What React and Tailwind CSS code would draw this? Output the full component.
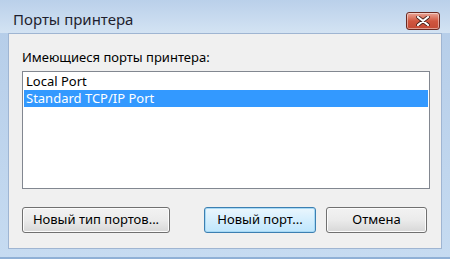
const ports = ['Local Port', 'Standard TCP/IP Port']

const CloseButton = () => (
  <div className="w-[34px] h-[18px] rounded-[3px] border border-[#6b2a22] bg-gradient-to-b from-[#e9a597] via-[#d0563f] to-[#c44a34] flex items-center justify-center shadow-[inset_0_0_0_1px_rgba(255,255,255,0.45)]">
    <svg width="14" height="10" viewBox="0 0 14 10">
      <path d="M2 1 L12 9 M12 1 L2 9" stroke="#3a1a14" strokeWidth="3.6" strokeLinecap="round" />
      <path d="M2 1 L12 9 M12 1 L2 9" stroke="#ffffff" strokeWidth="2.2" strokeLinecap="round" />
    </svg>
  </div>
)

const DialogButton = ({ label, width, primary }) => (
  <button
    className={
      primary
        ? `${width} h-[26px] rounded-[3px] border border-[#3c7fb1] bg-gradient-to-b from-[#eaf6fd] to-[#bee6fd] text-[13px] text-black shadow-[inset_0_0_0_1px_#a7d9f5]`
        : `${width} h-[26px] rounded-[3px] border border-[#707070] bg-gradient-to-b from-[#f2f2f2] via-[#ebebeb] to-[#d7d7d7] text-[13px] text-black shadow-[inset_0_0_0_1px_#fcfcfc]`
    }
  >
    {label}
  </button>
)

export default function App() {
  return (
    <div className="w-[450px] h-[259px] bg-gradient-to-b from-[#b4cce8] to-[#c6dbf1] flex flex-col font-['Noto_Sans','Open_Sans',sans-serif] overflow-hidden border-b-2 border-[#8fb0d6]">
      <div className="h-[33px] shrink-0 flex items-center justify-between pt-[8px] pl-[13px] pr-[10px] bg-gradient-to-b from-[#bad0ea] to-[#d3e3f3]">
        <span className="text-[15px] text-[#1e1e2e] leading-none pb-[2px]">Порты принтера</span>
        <CloseButton />
      </div>
      <div className="flex-1 mx-[8px] mb-[8px] bg-[#f0f0f0] border border-[#9fb5d2] flex flex-col pl-[13px] pr-[11px]">
        <div className="text-[13px] text-black leading-[13px] pt-[17px] pb-[7px]">Имеющиеся порты принтера:</div>
        <div className="h-[118px] shrink-0 bg-white border border-[#828790] pt-[1px] px-[1px]">
          {ports.map((p, i) => (
            <div
              key={p}
              className={
                i === 1
                  ? 'h-[17px] leading-[17px] pl-[2px] text-[13px] bg-[#3399ff] text-white'
                  : 'h-[17px] leading-[17px] pl-[2px] text-[13px] text-black'
              }
            >
              {p}
            </div>
          ))}
        </div>
        <div className="flex items-center mt-[18px] gap-[34px]">
          <DialogButton label="Новый тип портов..." width="w-[148px]" />
          <div className="flex gap-[10px]">
            <DialogButton label="Новый порт..." width="w-[112px]" primary />
            <DialogButton label="Отмена" width="w-[101px]" />
          </div>
        </div>
      </div>
    </div>
  )
}
